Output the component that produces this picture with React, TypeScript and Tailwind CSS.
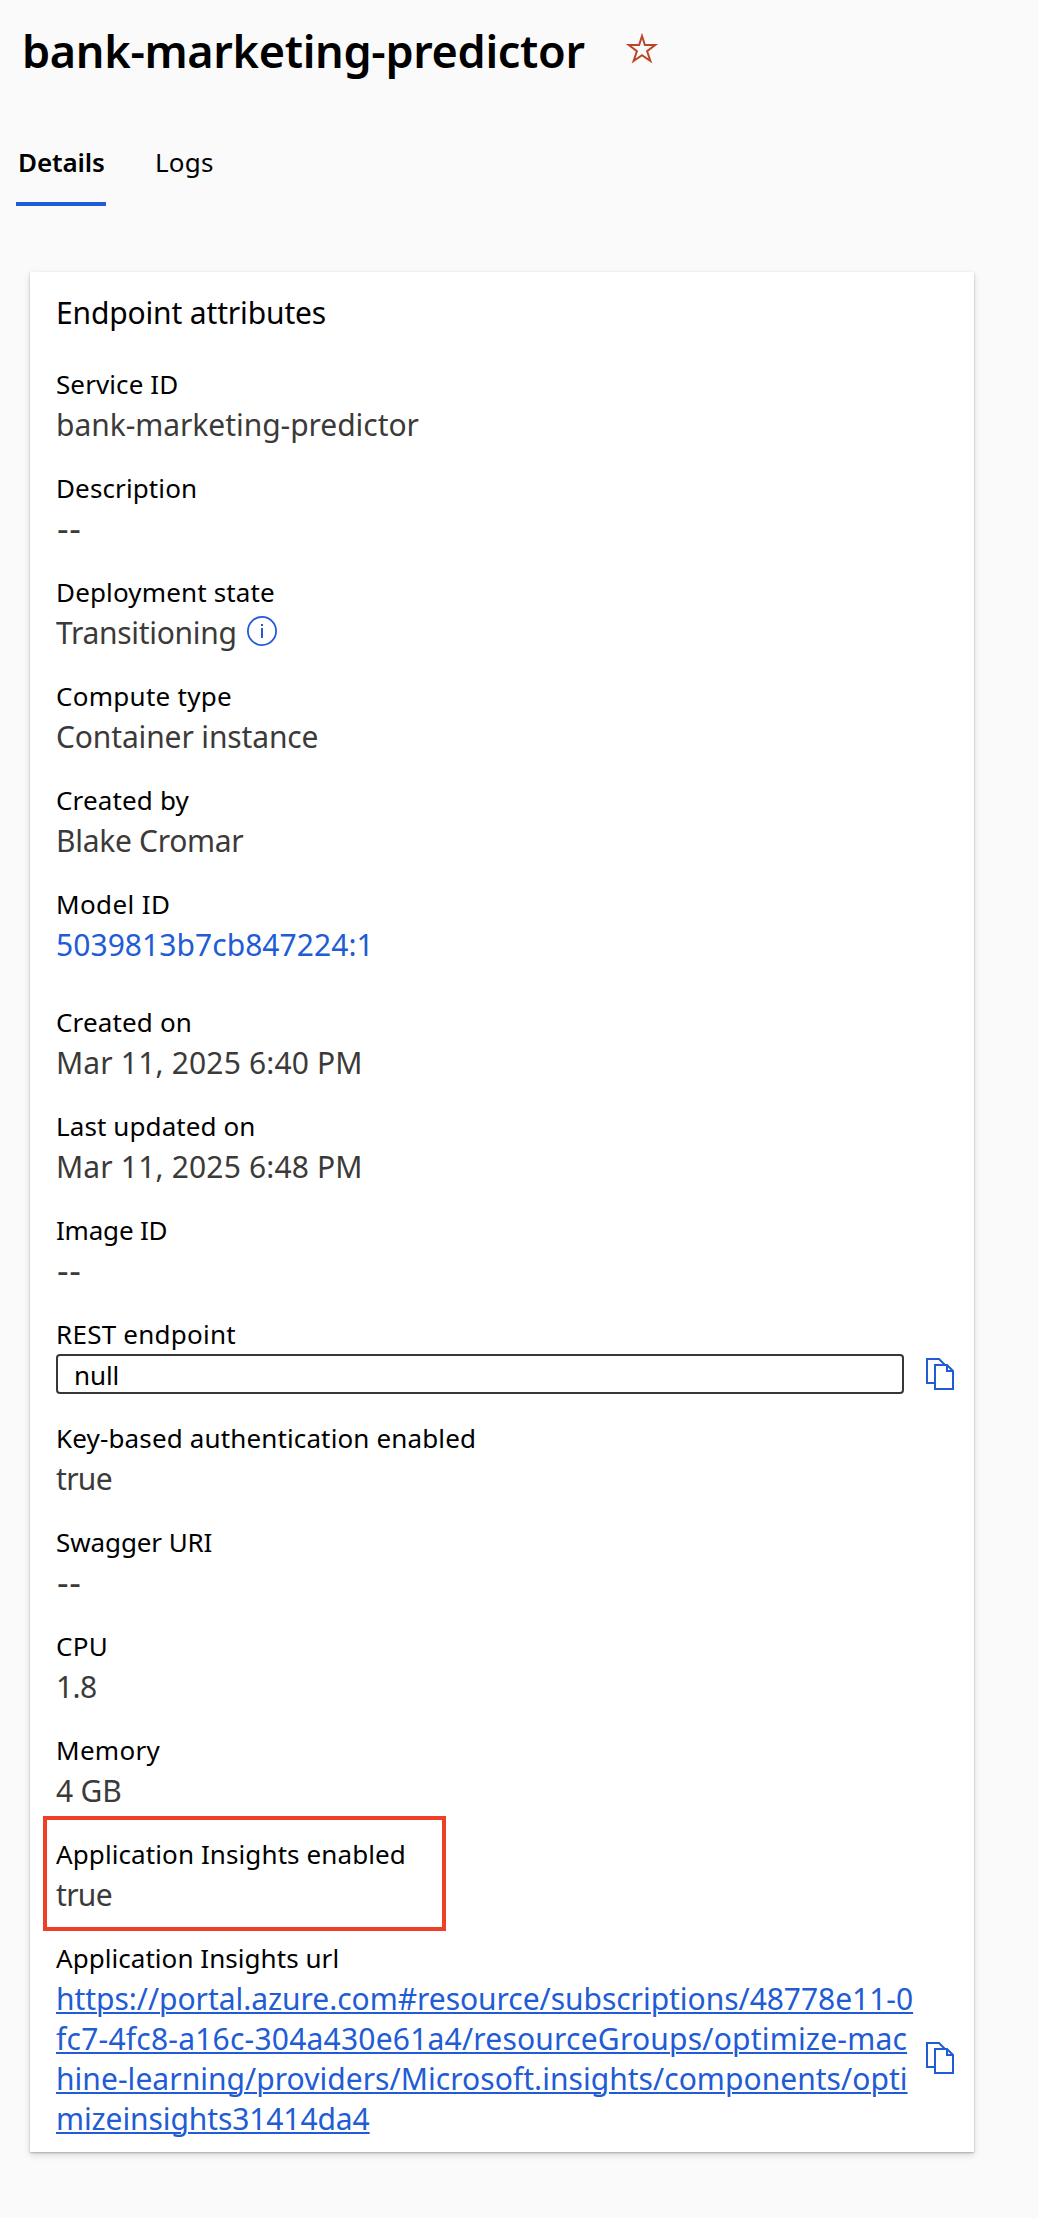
import React from "react";
import type { ReactNode } from "react";

function StarIcon() {
  return (
    <svg width="36" height="36" viewBox="0 0 36 36" fill="none" stroke="#bc4528" strokeWidth="2" strokeMiterlimit="10">
      <path d="M18 5 L20.9 14 H31.2 L23.1 20.2 L26.4 30 L18 24.1 L9.6 30 L12.9 20.2 L4.8 14 H15.1 Z" />
    </svg>
  );
}

function InfoIcon() {
  return (
    <svg width="30" height="30" viewBox="0 0 30 30" fill="none" stroke="#215bd5">
      <circle cx="15" cy="15" r="14.1" strokeWidth="1.8" />
      <path d="M15 8v2M15 12v10" strokeWidth="2" />
    </svg>
  );
}

function CopyIcon() {
  return (
    <svg className="shrink-0" width="28" height="32" viewBox="0 0 28 32" fill="none" stroke="#215bd5" strokeWidth="2">
      <path d="M8 25H1V1H13L18.5 6.5" />
      <path d="M9 7H21L27 13V31H9Z" />
      <path d="M21 7V13H27" />
    </svg>
  );
}

function Empty() {
  return <span className="-mt-px h-10 pl-px text-[36px] tracking-[0.7px]">--</span>;
}

function Field({ label, tracking, children }: { label: string; tracking: string; children: ReactNode }) {
  return (
    <div>
      <dt className={`pb-px text-[26px] leading-10 text-black ${tracking}`}>{label}</dt>
      <dd className="-mb-px flex min-h-10 text-[30px] leading-10 text-[#3b3a39]">{children}</dd>
    </div>
  );
}

export default function App() {
  return (
    <div className="min-h-[2218px] bg-[#fafafa] font-['Noto_Sans','Open_Sans',sans-serif] text-black">
      <header className="flex gap-[39px] pt-[19px] pl-[22px]">
        <h1 className="text-[45px] leading-[64px] font-semibold tracking-[-0.32px]">bank-marketing-predictor</h1>
        <span className="mt-[12px]">
          <StarIcon />
        </span>
      </header>

      <nav className="mt-[45px] flex h-[78px] gap-[49px] pl-4 text-[26px]">
        <div className="h-full w-[90px] border-b-4 border-[#215bd5] pt-[14px] pl-[2px] leading-10 font-semibold tracking-[-0.12px]">
          Details
        </div>
        <div className="pt-[14px] leading-10 tracking-[0.22px]">Logs</div>
      </nav>

      <main className="mt-[66px] ml-[30px] h-[1880px] w-[944px] bg-white pt-[21px] pl-[26px] shadow-[0_3.2px_7.2px_rgba(0,0,0,0.132),0_0.6px_1.8px_rgba(0,0,0,0.25)]">
        <h2 className="text-[30px] leading-10 tracking-[-0.15px]">Endpoint attributes</h2>

        <dl className="mt-[31px] flex flex-col gap-6">
          <Field label="Service ID" tracking="tracking-[0.1px]">
            <span className="tracking-[-0.05px]">bank-marketing-predictor</span>
          </Field>
          <Field label="Description" tracking="tracking-[0.12px]">
            <Empty />
          </Field>
          <Field label="Deployment state" tracking="tracking-[0.15px]">
            <span className="w-[191px] tracking-[-0.29px]">Transitioning</span>
            <span className="mt-[3px]">
              <InfoIcon />
            </span>
          </Field>
          <Field label="Compute type" tracking="tracking-[0.27px]">
            <span className="tracking-[-0.14px]">Container instance</span>
          </Field>
          <Field label="Created by" tracking="tracking-[0.15px]">
            <span className="tracking-[-0.3px]">Blake Cromar</span>
          </Field>
          <Field label="Model ID" tracking="tracking-[0.4px]">
            <a className="mb-[14px] tracking-[0.05px] text-[#215bd5]">5039813b7cb847224:1</a>
          </Field>
          <Field label="Created on" tracking="tracking-[0.15px]">
            <span className="tracking-[0.16px]">Mar 11, 2025 6:40 PM</span>
          </Field>
          <Field label="Last updated on" tracking="tracking-[0.1px]">
            <span className="tracking-[0.16px]">Mar 11, 2025 6:48 PM</span>
          </Field>
          <Field label="Image ID" tracking="tracking-[-0.2px]">
            <Empty />
          </Field>
          <Field label="REST endpoint" tracking="tracking-[0.25px]">
            <div className="-mt-px flex items-center gap-[22px] self-start">
              <div className="h-10 w-[848px] rounded-[4px] border-2 border-[#383736] pl-4 text-[26px] leading-[38px] tracking-[-0.1px] text-black">
                null
              </div>
              <CopyIcon />
            </div>
          </Field>
          <Field label="Key-based authentication enabled" tracking="tracking-[0.14px]">
            <span className="tracking-[-0.7px]">true</span>
          </Field>
          <Field label="Swagger URI" tracking="tracking-[-0.1px]">
            <Empty />
          </Field>
          <Field label="CPU" tracking="tracking-[0.3px]">
            <span className="tracking-[-0.6px]">1.8</span>
          </Field>
          <Field label="Memory" tracking="tracking-[0.3px]">
            <span className="tracking-[-0.2px]">4 GB</span>
          </Field>
          <div className="relative">
            <div className="absolute -top-[18px] -left-[13px] h-[115px] w-[403px] border-4 border-[#ee4027]" />
            <Field label="Application Insights enabled" tracking="tracking-[0.1px]">
              <span className="tracking-[-0.7px]">true</span>
            </Field>
          </div>
          <Field label="Application Insights url" tracking="tracking-[0.05px]">
            <div className="flex items-center">
              <a className="w-[870px] whitespace-nowrap text-[#215bd5] underline decoration-2 underline-offset-2">
                <span className="tracking-[-0.04px]">https://portal.azure.com#resource/subscriptions/48778e11-0</span>
                <br />
                <span className="tracking-[0.21px]">fc7-4fc8-a16c-304a430e61a4/resourceGroups/optimize-mac</span>
                <br />
                <span className="tracking-[0.04px]">hine-learning/providers/Microsoft.insights/components/opti</span>
                <br />
                <span className="tracking-[-0.1px]">mizeinsights31414da4</span>
              </a>
              <span className="-mt-[2px]">
                <CopyIcon />
              </span>
            </div>
          </Field>
        </dl>
      </main>
    </div>
  );
}
